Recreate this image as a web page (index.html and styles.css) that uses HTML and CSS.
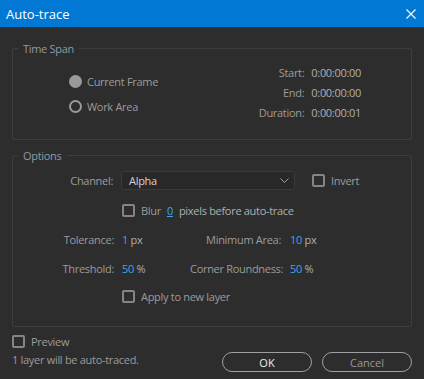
FILE: index.html
```html
<!DOCTYPE html>
<html lang="en">
<head>
    <meta charset="UTF-8">
    <title>Auto-trace</title>
    <link rel="stylesheet" href="styles.css">
</head>
<body>
    <div class="titlebar">
        <span class="title">Auto-trace</span>
        <svg class="close" width="10" height="10" viewBox="0 0 10 10">
            <path d="M0.5 0.5 L9.5 9.5 M9.5 0.5 L0.5 9.5" stroke="#fff" stroke-width="1.1" fill="none"/>
        </svg>
    </div>
    <div class="dialog">
        <fieldset class="group timespan">
            <legend>Time Span</legend>
            <div class="timespan-body">
                <div class="radios">
                    <label class="radio"><span class="dot checked"></span>Current Frame</label>
                    <label class="radio"><span class="dot"></span>Work Area</label>
                </div>
                <div class="times">
                    <span class="tlabel">Start:</span><span class="tvalue">0:00:00:00</span>
                    <span class="tlabel">End:</span><span class="tvalue">0:00:00:00</span>
                    <span class="tlabel">Duration:</span><span class="tvalue">0:00:00:01</span>
                </div>
            </div>
        </fieldset>

        <fieldset class="group options">
            <legend>Options</legend>
            <div class="row channel-row">
                <span class="label">Channel:</span>
                <div class="select">
                    <span>Alpha</span>
                    <svg width="9" height="5" viewBox="0 0 9 5"><path d="M0.5 0.5 L4.5 4.5 L8.5 0.5" stroke="#a0a0a0" fill="none"/></svg>
                </div>
                <label class="check invert"><span class="box"></span>Invert</label>
            </div>
            <div class="row blur-row">
                <span></span>
                <label class="check"><span class="box"></span>Blur <span class="num underline">0</span> <span class="strong">pixels before auto-trace</span></label>
            </div>
            <div class="row param-row">
                <span class="label">Tolerance:</span>
                <span><span class="num">1</span> <span class="unit">px</span></span>
                <span class="label">Minimum Area:</span>
                <span><span class="num">10</span> <span class="unit">px</span></span>
            </div>
            <div class="row param-row short">
                <span class="label">Threshold:</span>
                <span><span class="num">50</span> <span class="unit">%</span></span>
                <span class="label">Corner Roundness:</span>
                <span><span class="num">50</span> <span class="unit">%</span></span>
            </div>
            <div class="row apply-row">
                <span></span>
                <label class="check"><span class="box"></span>Apply to new layer</label>
            </div>
        </fieldset>

        <div class="footer">
            <div class="preview">
                <label class="check"><span class="box"></span>Preview</label>
                <p class="note">1 layer will be auto-traced.</p>
            </div>
            <div class="buttons">
                <button class="button ok">OK</button>
                <button class="button">Cancel</button>
            </div>
        </div>
    </div>
</body>
</html>
```

FILE: styles.css
```css
body {
    margin: 0;
    background-color: #2d2d2d;
    font-family: "Open Sans", "Noto Sans", sans-serif;
    font-size: 11px;
    letter-spacing: -0.3px;
    color: #9c9c9c;
    width: 424px;
    height: 379px;
    overflow: hidden;
}
.titlebar {
    height: 27px;
    background-color: #0078d4;
    display: flex;
    align-items: center;
    justify-content: space-between;
    padding: 0 8px 0 6px;
}
.title {
    color: #fff;
    font-size: 13px;
    letter-spacing: 0;
}
.dialog {
    padding: 14px 12px 0 12px;
}
.group {
    border: 1px solid #3e3e3e;
    border-radius: 2px;
    margin: 0;
    padding: 0;
}
.group legend {
    color: #8f9aa5;
    padding: 0 5px;
    margin-left: 5px;
    font-size: 11px;
}
.timespan {
    height: 97px;
}
.timespan-body {
    display: flex;
    justify-content: space-between;
    padding: 0 50px 0 56px;
}
.radios {
    display: flex;
    flex-direction: column;
    gap: 9px;
    padding-top: 17px;
}
.radio {
    display: flex;
    align-items: center;
    gap: 5px;
    height: 16px;
}
.dot {
    width: 9px;
    height: 9px;
    border: 2px solid #9a9a9a;
    border-radius: 50%;
}
.dot.checked {
    background-color: #9a9a9a;
}
.times {
    display: grid;
    grid-template-columns: auto auto;
    column-gap: 7px;
    row-gap: 4px;
    align-content: start;
    padding-top: 9px;
}
.times span {
    line-height: 16px;
}
.tlabel {
    text-align: right;
}
.tvalue {
    color: #b0b0b0;
}
.options {
    margin-top: 8px;
    height: 175px;
    padding: 2px 0 0 0;
}
.row {
    display: grid;
    grid-template-columns: 109px 68px 100px auto;
    align-items: center;
    height: 29px;
    white-space: nowrap;
}
.channel-row,
.blur-row {
    height: 30px;
}
.param-row.short {
    height: 28px;
}
.row .label {
    text-align: right;
    padding-right: 8px;
}
.row .label + span + .label {
    padding-right: 9px;
}
.channel-row {
    grid-template-columns: 108px 174px auto;
}
.select {
    height: 19px;
    box-sizing: border-box;
    border: 1px solid #3a3a3a;
    border-radius: 2px;
    background-color: #282828;
    display: flex;
    align-items: center;
    justify-content: space-between;
    padding: 0 5px 0 7px;
    color: #d2d2d2;
}
.invert {
    margin-left: 17px;
}
.blur-row,
.apply-row {
    grid-template-columns: 109px auto;
}
.check {
    display: flex;
    align-items: center;
    gap: 6px;
}
.box {
    width: 9px;
    height: 9px;
    border: 2px solid #858585;
    border-radius: 2px;
}
.num {
    color: #3aa6ec;
}
.underline {
    text-decoration: underline;
}
.unit,
.strong {
    color: #b0b0b0;
}
.footer {
    display: flex;
    justify-content: space-between;
    align-items: flex-start;
    padding-top: 7px;
}
.note {
    margin: 3px 0 0 0;
}
.buttons {
    display: flex;
    gap: 10px;
    margin-top: 18px;
}
.button {
    width: 90px;
    height: 20px;
    border: 1px solid #a0a0a0;
    border-radius: 10px;
    background: transparent;
    font-family: inherit;
    font-size: 11px;
    color: #999;
}
.button.ok {
    color: #eee;
}
```
